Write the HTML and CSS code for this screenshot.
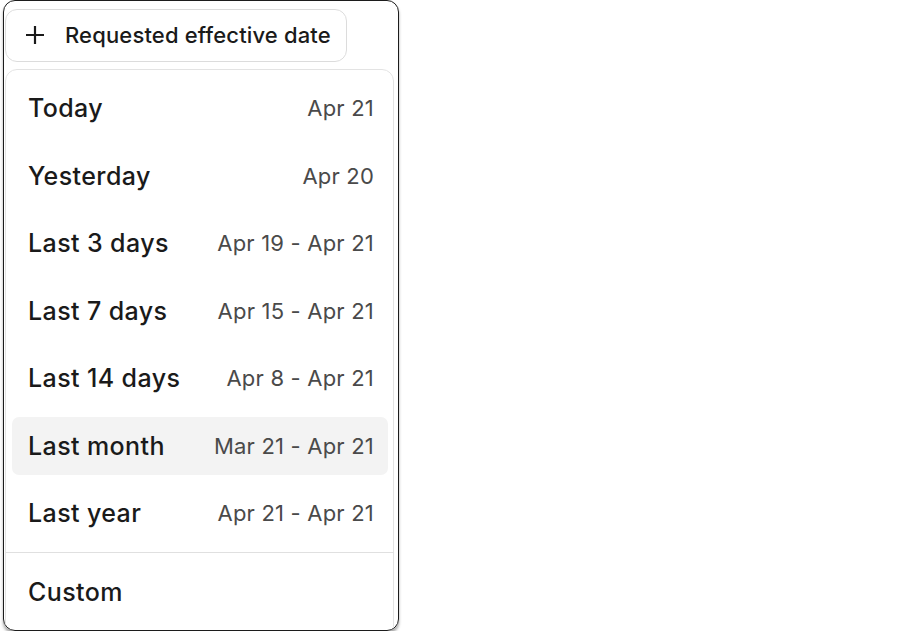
FILE: index.html
```html
<!DOCTYPE html>
<html>
<head>
    <title>Date filter</title>
    <link rel="stylesheet" href="styles.css">
</head>
<body>
    <div class="frame">
        <button class="filter-btn">
            <svg class="plus" width="20" height="20" viewBox="0 0 20 20">
                <path d="M10 1v18M1 10h18" stroke="#1a1a1a" stroke-width="2.2" fill="none"/>
            </svg>
            <span>Requested effective date</span>
        </button>
        <div class="menu">
            <div class="item"><span class="label">Today</span><span class="range">Apr 21</span></div>
            <div class="item"><span class="label">Yesterday</span><span class="range">Apr 20</span></div>
            <div class="item"><span class="label">Last 3 days</span><span class="range">Apr 19 - Apr 21</span></div>
            <div class="item"><span class="label">Last 7 days</span><span class="range">Apr 15 - Apr 21</span></div>
            <div class="item"><span class="label">Last 14 days</span><span class="range">Apr 8 - Apr 21</span></div>
            <div class="item active"><span class="label">Last month</span><span class="range">Mar 21 - Apr 21</span></div>
            <div class="item"><span class="label">Last year</span><span class="range">Apr 21 - Apr 21</span></div>
            <div class="divider"></div>
            <div class="item"><span class="label">Custom</span></div>
        </div>
    </div>
</body>
</html>
```

FILE: styles.css
```css
body {
    margin: 0;
    background: #fff;
    font-family: Inter, "Noto Sans", sans-serif;
}
.frame {
    box-sizing: border-box;
    width: 396px;
    height: 631px;
    margin-left: 3px;
    padding: 8px 0 0 1px;
    border: 1.5px solid #1c1c1c;
    border-radius: 12px;
    box-shadow: 0 3px 3px rgba(0, 0, 0, 0.35);
    overflow: hidden;
}
.filter-btn {
    display: flex;
    align-items: center;
    gap: 20px;
    box-sizing: border-box;
    width: 342px;
    height: 53px;
    padding: 0 0 2px 19px;
    background: #fff;
    border: 1px solid #dcdcdc;
    border-radius: 12px;
    font-family: inherit;
    font-size: 22px;
    font-weight: 500;
    letter-spacing: 0.15px;
    color: #1a1a1a;
}
.menu {
    box-sizing: border-box;
    width: 389px;
    margin-top: 7px;
    padding: 9px 5px 20px 6px;
    border: 1px solid #e3e3e3;
    border-radius: 12px;
    display: flex;
    flex-direction: column;
    gap: 9.5px;
}
.item {
    display: flex;
    align-items: center;
    justify-content: space-between;
    height: 58px;
    padding: 0 14px 0 16px;
    border-radius: 7px;
}
.item.active {
    background: #f3f3f3;
}
.label {
    font-size: 25px;
    font-weight: 450;
    letter-spacing: 0.4px;
    color: #1a1a1a;
}
.range {
    font-size: 22px;
    letter-spacing: 0.2px;
    color: #4a4a4a;
}
.divider {
    height: 1px;
    margin: 0.5px -6px 0;
    background: #e0e0e0;
}
```
